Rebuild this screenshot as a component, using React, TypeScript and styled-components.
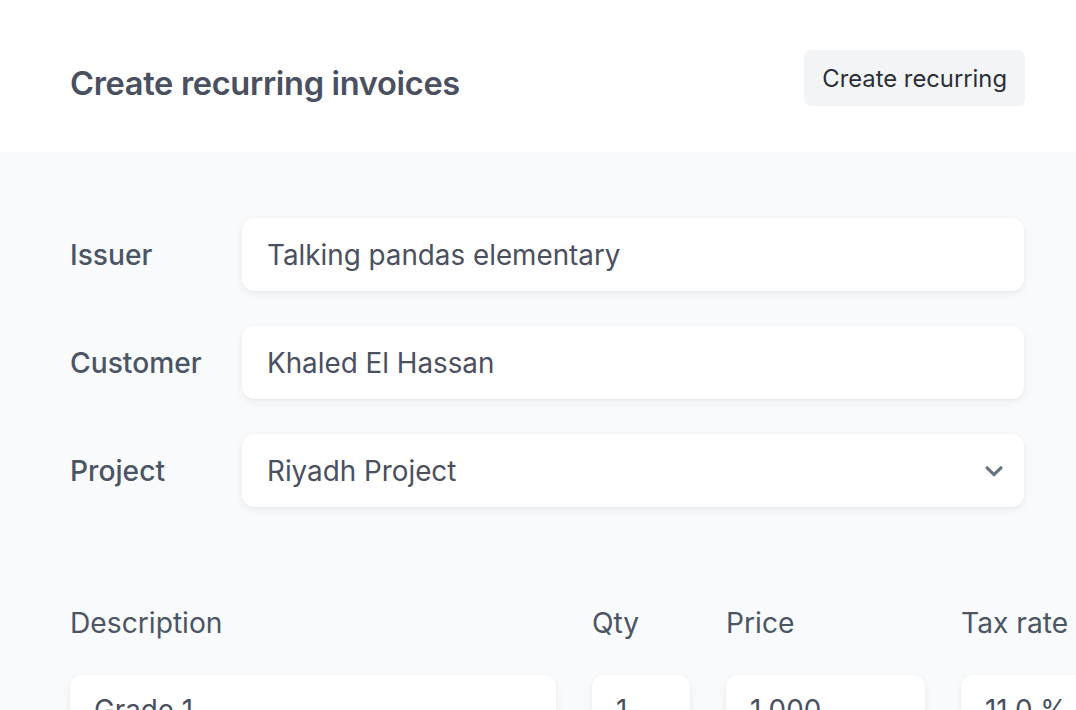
import styled, { createGlobalStyle } from 'styled-components';

const GlobalStyle = createGlobalStyle`
  html, body {
    margin: 0;
    padding: 0;
    background: #ffffff;
    overflow: hidden;
  }

  body {
    font-family: Inter, 'Noto Sans', 'Liberation Sans', sans-serif;
    -webkit-font-smoothing: antialiased;
  }
`;

const Page = styled.main`
  width: 1076px;
  height: 710px;
  overflow: hidden;
  background: #ffffff;
`;

const Header = styled.header`
  display: flex;
  align-items: center;
  justify-content: space-between;
  height: 152px;
  padding: 0 51px 0 70px;
  box-sizing: border-box;
`;

const Title = styled.h1`
  margin: 0;
  padding-top: 14px;
  font-size: 32.6px;
  font-weight: 600;
  color: #4b5060;
  letter-spacing: -0.01em;
`;

const HeaderButton = styled.button`
  height: 56px;
  margin-top: 4px;
  padding: 0 18px;
  border: none;
  border-radius: 7px;
  background: #f3f4f6;
  color: #2b2f37;
  font-family: inherit;
  font-size: 23.8px;
  font-weight: 400;
  cursor: pointer;
`;

const Panel = styled.section`
  background: #f9fafb;
  padding: 66px 52px 0 70px;
  min-height: 600px;
  border-bottom-left-radius: 16px;
`;

const FormGrid = styled.div`
  display: grid;
  grid-template-columns: 172px 1fr;
  row-gap: 35px;
  align-items: center;
`;

const Label = styled.label`
  font-size: 28.2px;
  font-weight: 500;
  color: #4b5563;
`;

const Field = styled.div`
  display: flex;
  align-items: center;
  justify-content: space-between;
  height: 73px;
  padding: 0 14px 0 25px;
  box-sizing: border-box;
  background: #ffffff;
  border-radius: 12px;
  box-shadow: 0 3px 8px rgba(17, 24, 39, 0.06), 0 1px 2px rgba(17, 24, 39, 0.03);
  font-size: 27.8px;
  color: #4b5060;
`;

const Chevron = () => (
  <svg width="32" height="32" viewBox="0 0 24 24" fill="none" stroke="#6b7280" strokeWidth="2.4" strokeLinecap="round" strokeLinejoin="round">
    <path d="m6.8 9.6 5.2 5.2 5.2-5.2" />
  </svg>
);

const Table = styled.div`
  display: grid;
  grid-template-columns: 486px 98px 199px 200px;
  column-gap: 36px;
  margin-top: 96px;
  width: max-content;
`;

const HeadCell = styled.div`
  font-size: 28.2px;
  font-weight: 400;
  color: #4b5563;
  line-height: 40px;
  margin-bottom: 32px;
  white-space: nowrap;
`;

const Cell = styled.div`
  height: 73px;
  padding: 18px 0 0 24px;
  box-sizing: border-box;
  background: #ffffff;
  border-radius: 12px;
  box-shadow: 0 3px 8px rgba(17, 24, 39, 0.06), 0 1px 2px rgba(17, 24, 39, 0.03);
  font-size: 27.8px;
  color: #4b5060;
  white-space: nowrap;
`;

const fields = [
  { label: 'Issuer', value: 'Talking pandas elementary' },
  { label: 'Customer', value: 'Khaled El Hassan' },
  { label: 'Project', value: 'Riyadh Project', select: true },
];

const columns = ['Description', 'Qty', 'Price', 'Tax rate'];
const firstLine = ['Grade 1', '1', '1,000', '11.0 %'];

export default function App() {
  return (
    <Page>
      <GlobalStyle />
      <Header>
        <Title>Create recurring invoices</Title>
        <HeaderButton>Create recurring</HeaderButton>
      </Header>
      <Panel>
        <FormGrid>
          {fields.map(({ label, value, select }) => (
            <>
              <Label key={label}>{label}</Label>
              <Field key={`${label}-field`}>
                <span>{value}</span>
                {select && <Chevron />}
              </Field>
            </>
          ))}
        </FormGrid>
        <Table>
          {columns.map((c) => (
            <HeadCell key={c}>{c}</HeadCell>
          ))}
          {firstLine.map((v, i) => (
            <Cell key={i}>{v}</Cell>
          ))}
        </Table>
      </Panel>
    </Page>
  );
}
